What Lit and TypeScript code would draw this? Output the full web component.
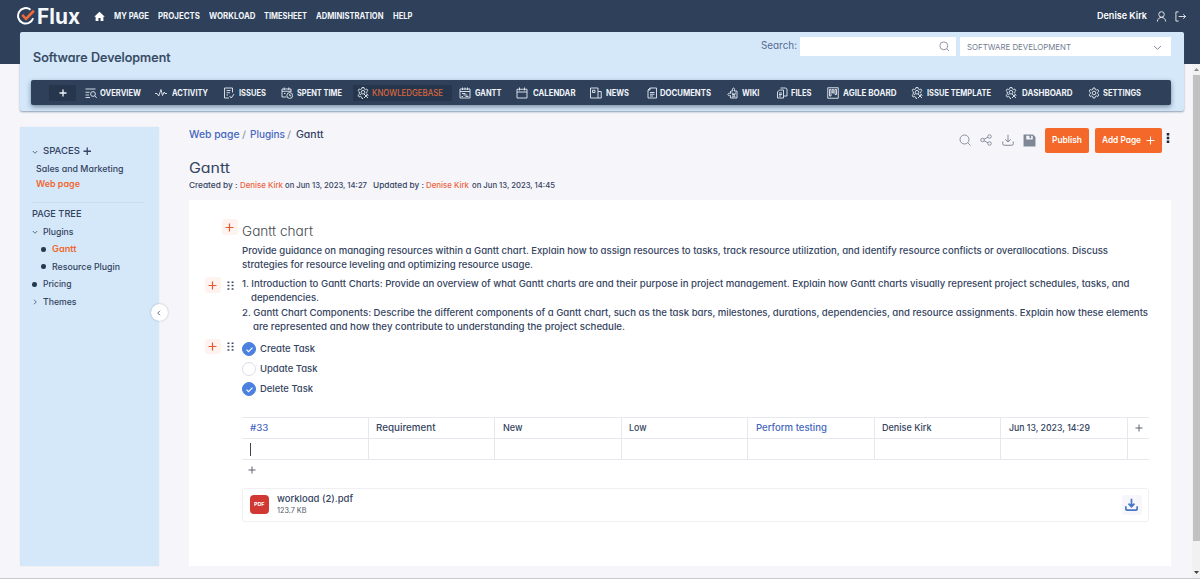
import { LitElement, html, css, svg } from "lit";
import { customElement, property } from "lit/decorators.js";

/** A single line of text stretched so that it fills a given width. */
@customElement("fit-text")
class FitText extends LitElement {
  @property() t = "";
  @property({ type: Number }) w = 0;
  static styles = css`
    :host { display: block; flex: none; white-space: pre; line-height: 1.1; }
    span { display: inline-block; transform-origin: 0 50%; vertical-align: top; }
  `;
  render() {
    return html`<span>${this.t}</span>`;
  }
  firstUpdated() {
    const s = this.renderRoot.querySelector("span") as HTMLElement;
    const natural = s.getBoundingClientRect().width;
    s.style.transform = `scaleX(${this.w / natural})`;
    this.style.width = `${this.w}px`;
  }
}

const gearShape = svg`<path d="M10.1 2h3.8l.6 2.900 2.400 1.300 2.700-1.200 2 3.200-2.100 2.100v3.400l2.100 2.100-2 3.200-2.700-1.200-2.400 1.300-.6 2.900h-3.800l-.6-2.900-2.400-1.300L4.400 19l-2-3.200 2.100-2.100v-3.400L2.400 8.200l2-3.200 2.700 1.200 2.400-1.300z"/><circle cx="12" cy="12" r="3.600"/>`;
const gearTool = svg`<path d="M10 1h4l.6 3 2.200 1.200L19.700 4l2 3.400-2.300 2.100v3M4.600 14.500l-2.300 2 2 3.500 2.900-1 2.200 1.200.6 2.800h2M4.600 14.500V9.500L2.300 7.400 4.300 4l2.900 1L9.400 4 10 1"/><circle cx="12" cy="10.500" r="3.600"/><path d="M8.500 13l-2 3.500M14 14l8 8M21.500 14.500L14 22M18.500 13.500l4 4"/>`;

const icons: Record<string, unknown> = {
  home: svg`<path fill="currentColor" stroke="none" d="M12 1.500L.5 12.500h3V22h6.200v-6.500h4.600V22h6.200v-9.500h3z"/>`,
  overview: svg`<path d="M1 4h20M1 10.500h8M1 16h7M1 21h9"/><circle cx="16" cy="14" r="4.800"/><path d="M19.500 17.500L23.500 22"/>`,
  activity: svg`<path d="M0 13h4l3.500 5L12 5l3 12 3.500-7 1.500 3h4"/>`,
  issues: svg`<path d="M19 11V2H3v20h9M7 7h8M7 11.500h7M7 16h3M13 18l3.500 4L22 14"/>`,
  time: svg`<path d="M11 20H2V4h18v6M2 8.500h18M6.500 1v5M15.500 1v5M6 13h3"/><circle cx="17.500" cy="17" r="5.800"/><path d="M17.500 14v3.500h3"/>`,
  gearTool,
  gear: gearShape,
  gantt: svg`<path d="M2 4h20v18H2zM2 9h20M7 1v5M12 1v5M17 1v5M6 13h7M9 16h8M13 19h6M5 19h3"/>`,
  calendar: svg`<path d="M2 4.500h20V22H2zM2 10h20M7 1v6M17 1v6"/>`,
  news: svg`<path d="M1 2h15v20H1zM16 9h6.500v13H16M5 6.500h5v4.500H5z"/>`,
  documents: svg`<path d="M8 2h13v20H4V6zM8 2v4H4M8 11h9M8 14.500h9M8 18h6"/>`,
  wiki: svg`<path d="M8 8h3.500c-3-8 6-8 3 0H20v14H7v-5c-7 2.500-7-6.500 0-4V8"/><path d="M10 11l2 6 1.500-4 1.500 4 2-6M10 19.500h7"/>`,
  files: svg`<path d="M9 2h10l3 2v14h-6M15 6v16H3V10l4-4h8M6 12h6M6 15h6M6 18h4"/>`,
  agile: svg`<path d="M1.500 1.500h21v21h-21z"/><path d="M5 5h3v13H5zM10.500 5h3v7h-3zM16 5h3v10h-3z"/>`,
  search: svg`<circle cx="11" cy="11" r="9"/><path d="M17.500 17.500l5.500 5.500"/>`,
  chevDown: svg`<path d="M3 8l9 9 9-9"/>`,
  chevRight: svg`<path d="M8 3l9 9-9 9"/>`,
  chevLeft: svg`<path d="M16 3l-9 9 9 9"/>`,
  user: svg`<circle cx="12" cy="7.500" r="6"/><path d="M3 23c0-12 18-12 18 0"/>`,
  logout: svg`<path d="M8 2H2v20h6M8 12h15M18 7l5 5-5 5"/>`,
  share: svg`<circle cx="5" cy="12" r="3.500"/><circle cx="19" cy="5" r="3.500"/><circle cx="19" cy="19" r="3.500"/><path d="M8 10.500l8-4M8 13.500l8 4"/>`,
  download: svg`<path d="M12 1.500v14M6.500 10.500L12 16l5.500-5.500M1.500 15v4.500a3 3 0 003 3h15a3 3 0 003-3V15"/>`,
  save: svg`<path fill="currentColor" stroke="none" fill-rule="evenodd" d="M1 1h17.500L23 5.500V23H1zM6 3v7h12V3h-3v5h-3V3z"/>`,
  plus: svg`<path d="M12 1.500v21M1.500 12h21"/>`,
  drag: svg`<path fill="currentColor" stroke="none" d="M4 1h5v4H4zM15 1h5v4h-5zM4 10h5v4H4zM15 10h5v4h-5zM4 19h5v4H4zM15 19h5v4h-5z"/>`,
  dots: svg`<path fill="currentColor" stroke="none" d="M9 0h6v6H9zM9 9h6v6H9zM9 18h6v6H9z"/>`,
  check: svg`<path d="M4 12.500l5.500 5.500L20 7"/>`,
  logo: svg`<path d="M18 3.600A10.300 10.300 0 1021.500 15" stroke-width="2.600"/><path d="M7 10.500l5 5.500L22.500 5" stroke="#f1683a" stroke-width="3.400"/>`,
};

const icon = (name: string, size: number, stroke = 1.8) =>
  html`<svg class="ic" width=${size} height=${size} viewBox="0 0 24 24" fill="none" stroke="currentColor" stroke-width=${stroke}>${icons[name]}</svg>`;

const text = (t: string, w: number, cls = "") => html`<fit-text class=${cls} .t=${t} .w=${w}></fit-text>`;

/* icon, icon slot, label, label width, gap after */
const tabs: [string, number, string, number, number][] = [
  ["overview", 15, "OVERVIEW", 41, 14],
  ["activity", 17, "ACTIVITY", 36, 15.5],
  ["issues", 15.5, "ISSUES", 27, 15],
  ["time", 16, "SPENT TIME", 45, 15],
  ["gearTool", 15.5, "KNOWLEDGEBASE", 71, 15.5],
  ["gantt", 16, "GANTT", 26.5, 15],
  ["calendar", 16.5, "CALENDAR", 42.5, 15],
  ["news", 16, "NEWS", 23, 16.5],
  ["documents", 14.5, "DOCUMENTS", 51, 15.5],
  ["wiki", 15.5, "WIKI", 17.5, 16],
  ["files", 15, "FILES", 20.5, 15.5],
  ["agile", 16, "AGILE BOARD", 53.5, 14.5],
  ["gearTool", 16.5, "ISSUE TEMPLATE", 64, 14],
  ["gearTool", 16.5, "DASHBOARD", 50.5, 15.5],
  ["gear", 15.5, "SETTINGS", 38, 0],
];

const topLinks: [string, number][] = [
  ["MY PAGE", 35], ["PROJECTS", 42], ["WORKLOAD", 46.5], ["TIMESHEET", 43], ["ADMINISTRATION", 67.5], ["HELP", 19.5],
];

const cells: [string, number, boolean][] = [
  ["#33", 18.5, true], ["Requirement", 59.5, false], ["New", 19.5, false], ["Low", 17.5, false],
  ["Perform testing", 71, true], ["Denise Kirk", 49.5, false], ["Jun 13, 2023, 14:29", 81, false],
];

const tasks: [string, number, boolean][] = [
  ["Create Task", 55, true], ["Update Task", 57.5, false], ["Delete Task", 53, true],
];

@customElement("app-root")
class AppRoot extends LitElement {
  static styles = css`
    :host {
      display: block; width: 1200px; height: 579px; overflow: hidden; box-sizing: border-box;
      background: #f5f5fa; border-bottom: 1px solid #c9c9cd; color: #344360;
      font-family: Inter, "Open Sans", sans-serif; font-size: 9.2px; font-weight: 500;
      font-feature-settings: "cv11" 1;
    }
    * { box-sizing: border-box; }
    .ic { display: block; flex: none; }
    .row { display: flex; align-items: center; }
    .top { height: 64px; background: #2f415a; color: #fff; padding: 0 14px 0 16.5px; display: flex; align-items: flex-start; }
    .bar { flex: 1; height: 32px; display: flex; align-items: center; font-size: 8.6px; font-weight: 650; }
    .brand { font-size: 21px; font-weight: 700; margin: 1px 13.5px 0 2.5px; color: #f4f7fb; }
    .links { display: flex; gap: 9px; margin-left: 9px; padding-top: 1.5px; flex: 1; color: #f3f6fa; }
    .who { font-size: 9.4px; font-weight: 600; margin-right: 9px; }
    .out { margin-left: 8px; }
    .below { display: flex; height: 515px; }
    .page { width: 1192px; flex: none; }
    .project {
      margin: -32px 8px 0 20px; height: 79px; background: #d4e8fa; border-radius: 2px;
      box-shadow: 0 1px 2px rgba(60, 90, 120, .55); padding: 5px 13px 0 11px;
      position: relative;
    }
    .phead { display: flex; height: 43px; align-items: flex-start; }
    .ptitle { font-size: 12.6px; font-weight: 500; margin: 14px auto 0 2px; color: #33475f; -webkit-text-stroke: .2px #33475f; }
    .slabel { font-size: 10.5px; font-weight: 400; margin: 3px 3px 0 0; color: #566b91; }
    .field { height: 19px; background: #fff; display: flex; align-items: center; color: #737c92; }
    .find { width: 156px; justify-content: flex-end; padding-right: 7px; margin-right: 4px; }
    .select { width: 211px; justify-content: space-between; padding: 1px 9px 0 7px; font-size: 8px; font-weight: 400; }
    .tabs {
      height: 25px; background: #2f415a; border-radius: 2px; box-shadow: 0 2px 5px rgba(47, 65, 90, .55);
      display: flex; align-items: center; padding-left: 18px; color: #f1f5fa; font-size: 8.5px; font-weight: 650;
    }
    .tab fit-text { padding-top: 1.5px; }
    .add { width: 27px; height: 16px; background: #26364c; display: flex; align-items: center; justify-content: center; margin-right: 8.5px; }
    .tab { display: flex; align-items: center; height: 16px; flex: none; }
    .tab.on { background: #26364c; padding: 0 9px 0 4px; margin: 0 -9px 0 -4px; color: #d9663e; font-weight: 550; }
    .slot { flex: none; color: #e6edf5; }
    .body { display: flex; height: 439px; margin-top: 16px; padding-left: 20px; }
    .side { width: 138.5px; background: #d4e8fa; padding: 17px 0 0 12px; position: relative; font-size: 9px; border-radius: 2px; flex: none; box-shadow: 0 0 1px #b9cbdd; font-weight: 450; }
    .side .row { height: 17.5px; }
    .cap { font-size: 9.4px; }
    .side .head { height: 15px; }
    .side .s1 { height: 20px; padding-left: 4px; }
    .side .s2 { height: 9px; padding-left: 4px; }
    .orange { color: #f0672f; font-weight: 600; }
    .rule { height: 1px; width: 112px; background: #c8ddee; margin: 14px 0 3px; }
    .side .tree { height: 17px; }
    .lead { width: 11px; flex: none; display: flex; align-items: center; }
    .in { padding-left: 9px; }
    .dot { width: 4.6px; height: 4.6px; border-radius: 50%; background: #24394f; }
    .spc { margin-left: 2.5px; }
    .fold {
      position: absolute; right: -9px; top: 177px; width: 17px; height: 17px; border-radius: 50%; background: #fff;
      box-shadow: 0 0 2px rgba(60, 80, 110, .4); display: flex; align-items: center; justify-content: center;
    }
    .main { margin-left: 30.5px; width: 982px; flex: none; display: flex; flex-direction: column; }
    .mhead { height: 73px; display: flex; }
    .info { flex: 1; }
    .crumbs { height: 15px; padding-top: 1.5px; font-size: 9.8px; font-weight: 450; }
    .blue { color: #4566c0; }
    .cur { font-weight: 500; }
    .sl { margin: 0 4.5px 0 2px; color: #8a90a0; font-weight: 400; }
    .title { font-size: 14px; font-weight: 400; height: 14px; margin-top: 19px; }
    .meta { height: 9px; font-size: 7.9px; margin-top: 6px; white-space: pre; }
    .red { color: #ee6340; margin: 0 2.5px 0 2px; }
    .upd { margin-left: 6px; }
    .tools { display: flex; height: 26px; align-items: center; color: #7f8797; }
    .tools > .ic { margin-right: 9.2px; }
    .btn {
      background: #f4692a; color: #fff; height: 25px; border-radius: 2px; display: flex; align-items: center;
      padding: 0 7px; font-size: 8.6px; font-weight: 600; margin-right: 6px;
    }
    .btn fit-text { padding-top: 1px; }
    .publish { width: 44px; margin-left: 0; }
    .addpage { width: 67px; justify-content: space-between; margin-right: 0; }
    .more { color: #1b2430; width: 9px; height: 26px; display: flex; align-items: flex-start; justify-content: center; padding: 6px 0 0 2px; }
    .sheet { background: #fff; height: 366px; padding: 19px 22px 0 0; }
    .block { display: flex; }
    .gut { width: 53px; flex: none; display: flex; align-items: center; height: 16px; padding-left: 16px; gap: 5px; color: #39465c; }
    .gut.one { padding-left: 33px; }
    .pl { width: 15.5px; height: 15.5px; border-radius: 3px; background: #fef3ee; color: #e8592f; display: flex; align-items: center; justify-content: center; }
    .h { font-size: 13px; font-weight: 350; color: #454950; margin: 4.5px 0 0; height: 20.5px; }
    .ln { height: 14px; display: flex; align-items: center; }
    .para { margin-bottom: 5px; }
    .li2 { margin-top: 1.5px; }
    .i1 { padding-left: 9px; }
    .i2 { padding-left: 11px; }
    .listblock { margin-bottom: 4.5px; }
    .task { height: 20px; gap: 4.2px; }
    .ck { width: 14px; height: 14px; border-radius: 50%; border: 1px solid #dcdce8; background: #fff; display: flex; align-items: center; justify-content: center; color: #fff; }
    .ck.done { background: #4a80df; border-color: #4a80df; }
    .tasks .gut { margin-top: -.5px; }
    .rest { margin-left: 53px; width: 907px; }
    .table { display: grid; grid-template-columns: repeat(7, 126.5px) 21.5px; grid-template-rows: 21px 21px; margin-top: 18px; border-top: 1px solid #e7e8ed; }
    .cell { border-right: 1px solid #e7e8ed; border-bottom: 1px solid #e7e8ed; padding-left: 7.7px; display: flex; align-items: center; }
    .cell.last { border-right: 0; padding-left: 7px; }
    .caret { width: 1px; height: 13px; background: #3f4652; }
    .grey { color: #5d636e; }
    .addrow { height: 28px; padding: 6px 0 0 6px; }
    .file { height: 34px; border: 1px solid #f0f0f4; border-radius: 3px; display: flex; align-items: center; padding: 0 6.5px 1px 7px; }
    .pdf { width: 19px; height: 19px; border-radius: 4px; background: #d23833; color: #fff; font-size: 5.4px; font-weight: 700; display: flex; align-items: center; justify-content: center; margin-right: 8px; }
    .fn { flex: 1; display: flex; flex-direction: column; gap: 3px; font-size: 9.4px; }
    .kb { font-size: 7.4px; font-weight: 400; color: #50586a; }
    .dl { width: 20px; height: 20px; background: #f7f7fb; border-radius: 2px; color: #4a76c6; display: flex; align-items: center; justify-content: center; }
    .scroll { width: 8px; background: #f1f1f1; display: flex; flex-direction: column; align-items: center; }
    .arrow { height: 11px; display: flex; align-items: center; }
    .thumb { width: 7px; height: 466px; background: #c1c1c1; margin: 0 0 0 1px; }
    .end { margin-top: auto; height: 13px; }
  `;

  renderTop() {
    return html`<header class="top"><div class="bar">
      ${icon("logo", 18)}${text("Flux", 43, "brand")}
      ${icon("home", 11)}
      <nav class="links">${topLinks.map(([t, w]) => text(t, w))}</nav>
      ${text("Denise Kirk", 50, "who")}${icon("user", 11)}<span class="out">${icon("logout", 11)}</span>
    </div></header>`;
  }

  renderProject() {
    return html`<section class="project">
      <div class="phead">
        ${text("Software Development", 137.5, "ptitle")}
        ${text("Search:", 36, "slabel")}
        <div class="field find">${icon("search", 10.5)}</div>
        <div class="field select">${text("SOFTWARE DEVELOPMENT", 104)}${icon("chevDown", 9, 2.4)}</div>
      </div>
      <nav class="tabs">
        <div class="add">${icon("plus", 8, 4)}</div>
        ${tabs.map(([ic, slot, label, w, gap]) => html`
          <div class="tab ${label === "KNOWLEDGEBASE" ? "on" : ""}">
            <span class="slot" style="width:${slot}px">${icon(ic, 12)}</span>${text(label, w)}
          </div><span style="width:${gap}px;flex:none"></span>`)}
      </nav>
    </section>`;
  }

  renderSide() {
    return html`<aside class="side">
      <div class="row head"><span class="lead">${icon("chevDown", 6, 3)}</span>${text("SPACES", 37, "cap")}<span class="spc">${icon("plus", 8.5, 3.6)}</span></div>
      <div class="row s1">${text("Sales and Marketing", 87.5)}</div>
      <div class="row s2 orange">${text("Web page", 44)}</div>
      <div class="rule"></div>
      <div class="row tree">${text("PAGE TREE", 49.5, "cap")}</div>
      <div class="row"><span class="lead">${icon("chevDown", 6, 3)}</span>${text("Plugins", 30.5)}</div>
      <div class="row in orange"><span class="lead"><i class="dot"></i></span>${text("Gantt", 24.5)}</div>
      <div class="row in"><span class="lead"><i class="dot"></i></span>${text("Resource Plugin", 68)}</div>
      <div class="row"><span class="lead"><i class="dot"></i></span>${text("Pricing", 28.5)}</div>
      <div class="row"><span class="lead">${icon("chevRight", 6, 3)}</span>${text("Themes", 33.5)}</div>
      <div class="fold">${icon("chevLeft", 6, 3)}</div>
    </aside>`;
  }

  renderHead() {
    return html`<div class="mhead">
      <div class="info">
        <div class="row crumbs">
          ${text("Web page", 50.5, "blue")}${text("/", 4, "sl")}${text("Plugins", 35, "blue")}${text("/", 4, "sl")}${text("Gantt", 27.5, "cur")}
        </div>
        <div class="title row">${text("Gantt", 41)}</div>
        <div class="meta row">
          ${text("Created by :", 48.5)}${text("Denise Kirk", 43, "red")}${text("on Jun 13, 2023, 14:27", 82)}
          ${text("Updated by :", 51, "upd")}${text("Denise Kirk", 43, "red")}${text("on Jun 13, 2023, 14:45", 83)}
        </div>
      </div>
      <div class="tools">
        ${icon("search", 12)}${icon("share", 12)}${icon("download", 12, 2)}${icon("save", 13)}
        <div class="btn publish">${text("Publish", 30)}</div>
        <div class="btn addpage">${text("Add Page", 39)}${icon("plus", 9, 2.8)}</div>
        <div class="more">${icon("dots", 10)}</div>
      </div>
    </div>`;
  }

  renderSheet() {
    const handle = html`<span class="pl">${icon("plus", 9, 3.2)}</span>${icon("drag", 9)}`;
    return html`<article class="sheet">
      <div class="block">
        <div class="gut one"><span class="pl">${icon("plus", 9, 3.2)}</span></div>
        <div>
          <div class="h">${text("Gantt chart", 71)}</div>
          <div class="para">
            <div class="ln">${text("Provide guidance on managing resources within a Gantt chart. Explain how to assign resources to tasks, track resource utilization, and identify resource conflicts or overallocations. Discuss", 866)}</div>
            <div class="ln">${text("strategies for resource leveling and optimizing resource usage.", 291)}</div>
          </div>
        </div>
      </div>
      <div class="block listblock">
        <div class="gut">${handle}</div>
        <div>
          <div class="ln">${text("1. Introduction to Gantt Charts: Provide an overview of what Gantt charts are and their purpose in project management. Explain how Gantt charts visually represent project schedules, tasks, and", 887.5)}</div>
          <div class="ln i1">${text("dependencies.", 68)}</div>
          <div class="ln li2">${text("2. Gantt Chart Components: Describe the different components of a Gantt chart, such as the task bars, milestones, durations, dependencies, and resource assignments. Explain how these elements", 906)}</div>
          <div class="ln i2">${text("are represented and how they contribute to understanding the project schedule.", 372)}</div>
        </div>
      </div>
      <div class="block tasks">
        <div class="gut">${handle}</div>
        <div>${tasks.map(([t, w, done]) => html`<div class="row task"><span class="ck ${done ? "done" : ""}">${done ? icon("check", 9, 3) : ""}</span>${text(t, w)}</div>`)}</div>
      </div>
      <div class="rest">
        <div class="table">
          ${cells.map(([t, w, link]) => html`<div class="cell ${link ? "blue" : ""}">${text(t, w)}</div>`)}
          <div class="cell last grey">${icon("plus", 8, 3)}</div>
          <div class="cell"><i class="caret"></i></div>
          ${cells.slice(1).map(() => html`<div class="cell"></div>`)}
          <div class="cell last"></div>
        </div>
        <div class="addrow grey">${icon("plus", 8, 3)}</div>
        <div class="file">
          <div class="pdf">${text("PDF", 10.5)}</div>
          <div class="fn">${text("workload (2).pdf", 76)}${text("123.7 KB", 29.5, "kb")}</div>
          <div class="dl">${icon("download", 13, 3.2)}</div>
        </div>
      </div>
    </article>`;
  }

  render() {
    return html`${this.renderTop()}
      <div class="below">
        <div class="page">
          ${this.renderProject()}
          <div class="body">${this.renderSide()}<main class="main">${this.renderHead()}${this.renderSheet()}</main></div>
        </div>
        <div class="scroll">
          <span class="arrow"><svg class="ic" width="5" height="3" viewBox="0 0 5 3"><path fill="#8a8a8a" d="M0 3L2.5 0 5 3z"/></svg></span>
          <div class="thumb"></div>
          <span class="arrow end"><svg class="ic" width="5" height="3" viewBox="0 0 5 3"><path fill="#404040" d="M0 0h5L2.5 3z"/></svg></span>
        </div>
      </div>`;
  }
}
